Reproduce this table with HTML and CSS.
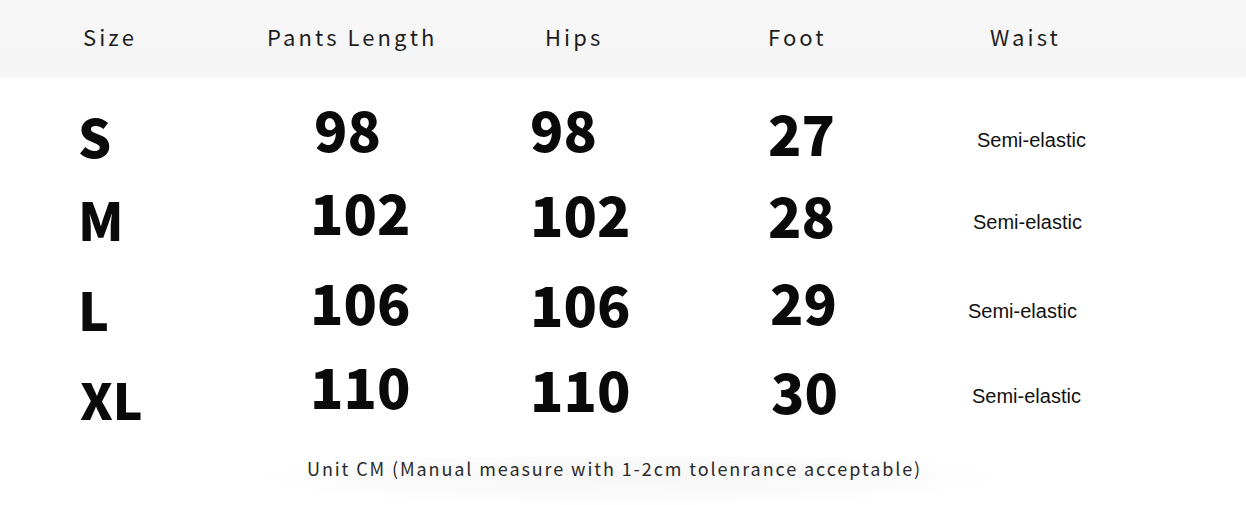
FILE: index.html
```html
<!DOCTYPE html>
<html lang="en">
<head>
<meta charset="utf-8">
<title>Size chart</title>
<link rel="stylesheet" href="styles.css">
</head>
<body>
<div class="chart">
  <div class="head">
    <div class="hc h-size">Size</div>
    <div class="hc h-pants">Pants Length</div>
    <div class="hc h-hips">Hips</div>
    <div class="hc h-foot">Foot</div>
    <div class="hc h-waist">Waist</div>
  </div>
  <div class="body">
    <div class="row row-s">
      <div class="cell size">S</div>
      <div class="cell num pants p98">98</div>
      <div class="cell num hips">98</div>
      <div class="cell num foot f-s">27</div>
      <div class="cell waist w-s">Semi-elastic</div>
    </div>
    <div class="row row-m">
      <div class="cell size">M</div>
      <div class="cell num pants">102</div>
      <div class="cell num hips">102</div>
      <div class="cell num foot f-m">28</div>
      <div class="cell waist w-m">Semi-elastic</div>
    </div>
    <div class="row row-l">
      <div class="cell size">L</div>
      <div class="cell num pants">106</div>
      <div class="cell num hips">106</div>
      <div class="cell num foot f-l">29</div>
      <div class="cell waist w-l">Semi-elastic</div>
    </div>
    <div class="row row-xl">
      <div class="cell size xl">XL</div>
      <div class="cell num pants">110</div>
      <div class="cell num hips h-xl">110</div>
      <div class="cell num foot f-xl">30</div>
      <div class="cell waist w-xl">Semi-elastic</div>
    </div>
  </div>
  <div class="note">
    <span class="note-text">Unit CM (Manual measure with 1-2cm tolenrance acceptable)</span>
  </div>
</div>
</body>
</html>
```

FILE: styles.css
```css
html, body {
  margin: 0;
  padding: 0;
  background: #ffffff;
}

.chart {
  width: 1246px;
  height: 505px;
  overflow: hidden;
  color: #0a0a0a;
  font-family: "Noto Sans CJK SC", "Noto Sans", sans-serif;
}

.head {
  height: 77px;
  box-sizing: border-box;
  padding-top: 25px;
  display: grid;
  grid-template-columns: 260px 260px 240px 200px 1fr;
  background: linear-gradient(180deg, #f7f7f7 0%, #f5f5f5 100%);
  box-shadow: 0 2px 4px rgba(0, 0, 0, 0.02);
}

.hc {
  font-size: 22px;
  line-height: 1;
  letter-spacing: 3.1px;
  font-weight: 400;
  color: #1e1e1e;
}

.h-size { padding-left: 83px; }
.h-pants { padding-left: 7px; }
.h-hips { padding-left: 25px; }
.h-foot { padding-left: 8px; }
.h-waist { padding-left: 30px; }

.body {
  padding-top: 24px;
}

.row {
  display: grid;
  grid-template-columns: 260px 260px 240px 200px 1fr;
  align-items: start;
}

.row-s { height: 83px; }
.row-m { height: 90px; }
.row-l { height: 84px; }
.row-xl { height: 62px; }

.cell {
  line-height: 1;
}

.size {
  font-size: 52px;
  font-weight: 900;
  padding-left: 78px;
  margin-top: 9px;
}

.size.xl {
  font-size: 50px;
  padding-left: 80px;
  margin-top: 15px;
}

.num {
  font-size: 55px;
  font-weight: 900;
}

.pants { padding-left: 50px; }
.pants.p98 { padding-left: 54px; }

.hips {
  padding-left: 10px;
  margin-top: 2px;
}
.row-s .hips { margin-top: 0; }
.hips.h-xl { margin-top: 3px; }

.foot { padding-left: 8px; }
.f-s { margin-top: 4px; }
.f-m { margin-top: 3px; }
.f-l { margin-top: 0; padding-left: 10px; }
.f-xl { margin-top: 5px; padding-left: 11px; }

.waist {
  font-family: "Liberation Sans", Arial, sans-serif;
  font-size: 20px;
  color: #111;
  margin-top: 28px;
}
.w-s { padding-left: 17px; margin-top: 29px; }
.w-m { padding-left: 13px; }
.w-l { padding-left: 8px; margin-top: 27px; }
.w-xl { padding-left: 12px; }

.note {
  margin-top: 37px;
  height: 48px;
  padding-left: 307px;
  background: radial-gradient(ellipse 380px 30px at 630px 20px, #f7f7f7 0%, #fafafa 60%, rgba(255,255,255,0) 100%);
}

.note-text {
  display: inline-block;
  font-size: 18px;
  line-height: 1;
  letter-spacing: 1.9px;
  font-weight: 400;
  color: #2a2a2a;
}
```
